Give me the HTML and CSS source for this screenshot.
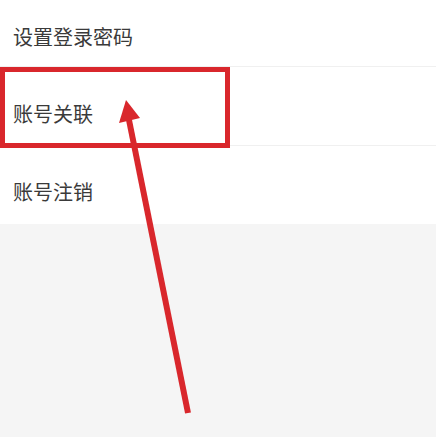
FILE: index.html
```html
<!DOCTYPE html>
<html lang="zh">
<head>
<meta charset="utf-8">
<link rel="stylesheet" href="styles.css">
</head>
<body>
<div class="page">
  <div class="list">
    <div class="row row-first"><span class="label">设置登录密码</span></div>
    <div class="row row-mid"><span class="label">账号关联</span></div>
    <div class="row row-last"><span class="label">账号注销</span></div>
  </div>
  <div class="highlight"></div>
  <svg class="arrow" width="436" height="437" viewBox="0 0 436 437">
    <line x1="188" y1="413" x2="128" y2="115" stroke="#d9272c" stroke-width="6"/>
    <polygon points="126,100 119,123 140,118" fill="#d9272c"/>
  </svg>
</div>
</body>
</html>
```

FILE: styles.css
```css
html, body {
  margin: 0;
  padding: 0;
  background: #f5f5f5;
}
.page {
  position: relative;
  width: 436px;
  height: 437px;
  overflow: hidden;
  background: #f5f5f5;
}
.list {
  background: #fff;
  display: flex;
  flex-direction: column;
}
.row {
  box-sizing: border-box;
  padding-left: 13px;
  border-bottom: 1px solid #f0f0f0;
}
.row-first {
  height: 67px;
  padding-top: 27px;
}
.row-mid {
  height: 79px;
  padding-top: 37px;
}
.row-last {
  height: 78px;
  padding-top: 36px;
  border-bottom: none;
}
.label {
  display: block;
  font-family: "Noto Sans CJK SC", "Noto Sans", sans-serif;
  font-size: 20px;
  line-height: 20px;
  color: #3a3a3a;
}
.highlight {
  position: absolute;
  left: 0;
  top: 67px;
  width: 230px;
  height: 81px;
  box-sizing: border-box;
  border: 5px solid #d9272c;
}
.arrow {
  position: absolute;
  left: 0;
  top: 0;
}
```
